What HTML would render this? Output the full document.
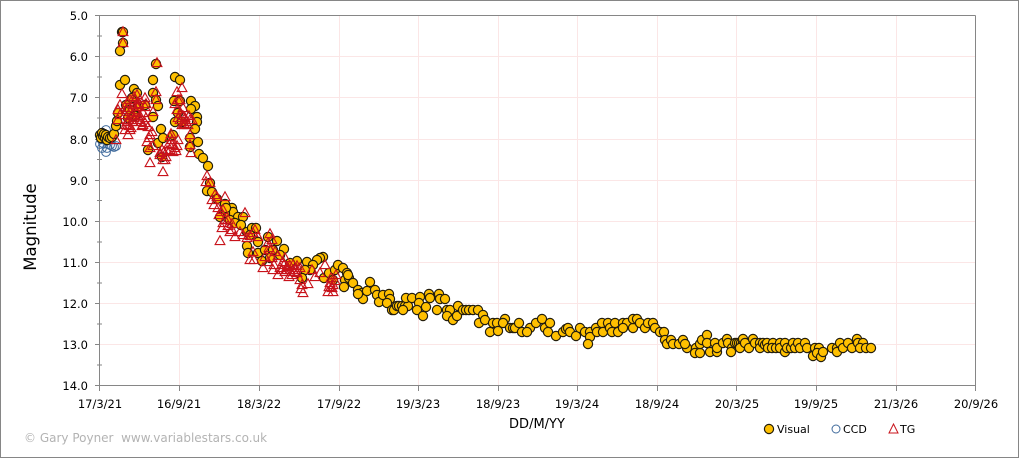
<!DOCTYPE html>
<html lang="en"><head><meta charset="utf-8"><title>Magnitude chart</title>
<style>
html,body{margin:0;padding:0;background:#fff}
svg{display:block}
text{font-family:"DejaVu Sans",sans-serif;fill:#000}
.v{marker-start:url(#mv);marker-mid:url(#mv);marker-end:url(#mv)}
.c{marker-start:url(#mc);marker-mid:url(#mc);marker-end:url(#mc)}
.t{marker-start:url(#mt);marker-mid:url(#mt);marker-end:url(#mt)}
</style></head><body>
<svg width="1020" height="458" viewBox="0 0 1020 458" xmlns="http://www.w3.org/2000/svg">
<defs>
<marker id="mv" markerUnits="userSpaceOnUse" markerWidth="12" markerHeight="12" refX="6" refY="6" overflow="visible"><circle cx="6" cy="6" r="4.6" fill="#FFC000" stroke="#241e0c" stroke-width="1.2"/></marker>
<marker id="mc" markerUnits="userSpaceOnUse" markerWidth="12" markerHeight="12" refX="6" refY="6" overflow="visible"><circle cx="6" cy="6" r="4.4" fill="none" stroke="#3f6a9c" stroke-width="1"/></marker>
<marker id="mt" markerUnits="userSpaceOnUse" markerWidth="12" markerHeight="12" refX="6" refY="6" overflow="visible"><path d="M6 .8L10.9 9.6H1.1Z" fill="none" stroke="#c8131b" stroke-width="1.1"/></marker>
</defs>
<rect x="0.5" y="0.5" width="1018" height="457" fill="#fff" stroke="#868686"/>
<g stroke="#fbe6e6" stroke-width="1" fill="none">
<path d="M100 56.5H975M100 97.5H975M100 139.5H975M100 180.5H975M100 221.5H975M100 262.5H975M100 303.5H975M100 344.5H975"/>
<path d="M179.5 16V385M259.5 16V385M339.5 16V385M418.5 16V385M498.5 16V385M577.5 16V385M657.5 16V385M736.5 16V385M816.5 16V385M896.5 16V385"/>
</g>
<g stroke="#868686" stroke-width="1" fill="none">
<path d="M99.5 15.5V385.5H975.5V15.5"/>
<path d="M95 15.5H975.5"/>
<path d="M95 56.5H99M95 97.5H99M95 139.5H99M95 180.5H99M95 221.5H99M95 262.5H99M95 303.5H99M95 344.5H99M95 385.5H99"/>
<path d="M97 36H102M97 77H102M97 118H102M97 159.500H102M97 200.500H102M97 242H102M97 283H102M97 324H102M97 365H102"/>
<path d="M99.500 386V391M179.500 386V391M259.500 386V391M339.500 386V391M418.500 386V391M498.500 386V391M577.500 386V391M657.500 386V391M736.500 386V391M816.500 386V391M896.500 386V391M975.500 386V391"/>
</g>
<g font-size="11.500" text-anchor="end">
<text x="88" y="20">5.0</text><text x="88" y="61">6.0</text><text x="88" y="102">7.0</text><text x="88" y="144">8.0</text><text x="88" y="185">9.0</text><text x="88" y="226">10.0</text><text x="88" y="267">11.0</text><text x="88" y="308">12.0</text><text x="88" y="349">13.0</text><text x="88" y="390">14.0</text>
</g>
<g font-size="11.500" text-anchor="middle">
<text x="100" y="408">17/3/21</text><text x="179" y="408">16/9/21</text><text x="259" y="408">18/3/22</text><text x="339" y="408">17/9/22</text><text x="418" y="408">19/3/23</text><text x="498" y="408">18/9/23</text><text x="577" y="408">19/3/24</text><text x="657" y="408">18/9/24</text><text x="737" y="408">20/3/25</text><text x="816" y="408">19/9/25</text><text x="896" y="408">21/3/26</text><text x="976" y="408">20/9/26</text>
</g>
<text x="36" y="227" font-size="16.500" text-anchor="middle" transform="rotate(-90 36 227)">Magnitude</text>
<text x="537" y="428" font-size="13" text-anchor="middle">DD/M/YY</text>
<text x="24" y="442" font-size="12" style="fill:#b3b3b3">© Gary Poyner&#160; www.variablestars.co.uk</text>
<polyline class="c" fill="none" stroke="none" points="101,139 100,144 102,148 106,130 106,152 107,148 110,145 112,146 114,147 116,146 103,143"/>
<polyline class="v" fill="none" stroke="none" points="100,135 101,138 102,133 103,136 104,134 105,138 106,135 107,140 108,137 110,138 112,137 114,134 116,126 117,121 118,113 120,85 125,80 122,32 123,32 123,43 120,51 126,105 130,110 132,98 134,89 137,93 138,107 135,116 128,118 145,105 148,150 153,117 153,80 156,64 153,93 156,100 158,106 161,129 158,143 163,138 162,157 173,135 175,77 180,80 174,101 180,101 178,113 175,122 182,122 191,101 195,106 191,109 197,117 197,122 195,129 190,138 198,142 190,147 199,154 203,158 208,166 210,183 207,191 212,192 217,199 225,204 232,208 233,212 225,213 220,217 238,217 243,217 230,220 235,223 241,225 226,208 247,232 252,228 256,228 250,235 258,242 247,246 248,253 258,253 262,261 268,237 277,241 284,249 265,250 273,250 280,255 270,258 297,261 290,263 307,262 323,257 320,258 317,260 313,265 310,270 305,270 302,278 324,278 329,273 335,270 338,265 343,268 347,273 345,280 349,278 353,283 344,287 333,280 348,275 370,282 358,290 362,293 363,299 358,294 367,291 375,290 377,295 379,302 383,295 389,294 390,299 387,303 392,310 394,310 397,306 399,306 402,306 405,306 408,306 403,310 406,298 412,298 420,297 419,303 417,310 423,316 426,307 429,294 430,298 439,294 440,299 445,299 437,310 447,310 450,310 447,316 453,320 457,316 458,306 463,310 466,310 469,310 473,310 478,310 483,315 479,323 485,320 490,332 493,323 497,323 498,331 505,319 503,323 510,328 513,328 515,328 519,323 522,332 530,328 527,332 536,323 542,319 545,328 550,323 548,332 556,336 563,332 566,329 568,328 570,332 576,336 580,328 585,332 590,332 590,337 588,344 596,328 597,332 602,323 603,332 608,323 610,328 615,323 612,332 618,332 623,323 627,323 623,328 633,328 633,319 637,319 640,323 645,328 648,323 653,323 655,328 660,332 664,332 665,340 667,344 671,340 673,344 679,344 683,340 687,348 685,344 696,348 695,353 700,353 700,344 702,340 707,335 707,343 710,352 717,352 715,343 717,348 723,343 727,339 728,343 732,348 731,352 735,343 737,343 739,343 741,343 743,343 740,348 743,339 745,343 749,348 753,339 755,343 760,343 760,348 763,343 765,345 767,343 768,348 773,343 772,348 776,348 780,343 780,348 785,343 785,352 787,348 791,348 793,343 795,348 798,343 800,348 805,343 807,348 815,348 819,348 813,356 817,353 821,357 823,352 832,348 837,348 837,352 840,343 843,348 848,343 852,348 857,339 858,343 863,343 860,348 866,348 871,348"/>
<polyline class="t" fill="none" stroke="none" points="123,32 123,43 157,63 182,88 177,92 178,100 175,104 122,94 120,105 118,110 120,115 118,120 129,120 126,125 125,130 130,130 128,135 129,126 131,128 127,122 133,122 116,140 137,95 135,100 140,100 145,98 133,105 138,107 130,112 145,107 153,112 156,92 156,100 135,110 137,113 127,103 130,100 126,110 134,97 136,105 139,104 128,108 132,116 125,115 134,118 137,120 140,116 141,122 143,113 146,104 140,120 143,125 146,118 148,127 142,126 145,123 150,135 147,142 150,148 153,146 149,138 152,132 150,163 163,172 163,160 165,160 166,157 160,155 170,150 172,145 170,137 172,140 178,140 162,150 160,153 167,151 176,151 175,148 171,134 169,144 164,152 173,152 177,146 177,110 180,100 183,108 185,118 185,125 190,120 190,135 190,145 191,153 180,120 182,125 186,122 188,125 192,120 184,124 183,116 189,116 181,114 178,118 207,176 206,182 210,183 215,195 217,197 225,197 212,200 214,205 218,208 221,212 219,215 223,210 245,213 225,220 228,220 223,223 222,228 228,226 232,224 230,232 235,237 232,230 220,241 240,232 243,235 255,230 250,236 253,233 247,238 258,237 270,234 268,243 272,240 269,248 253,252 250,260 254,260 265,257 263,268 275,252 270,250 278,256 285,258 273,270 268,262 272,258 278,275 274,265 280,268 283,262 287,267 289,277 290,270 293,265 295,270 297,273 292,275 294,272 300,268 297,266 285,272 287,270 290,266 293,270 296,268 284,265 282,270 302,285 301,289 303,293 300,280 308,284 315,277 320,273 312,270 325,265 336,275 330,283 328,292 333,292 333,285 332,288 329,287 331,278 335,281"/>
<polyline class="v" fill="none" stroke="none" points="769,429"/>
<circle cx="836" cy="429" r="4" fill="none" stroke="#3f6a9c" stroke-width="1"/>
<path d="M893.500 424L898 433H889Z" fill="none" stroke="#c8131b" stroke-width="1"/>
<g font-size="11">
<text x="777" y="433">Visual</text><text x="843" y="433">CCD</text><text x="900" y="433">TG</text>
</g>
</svg>
</body></html>
